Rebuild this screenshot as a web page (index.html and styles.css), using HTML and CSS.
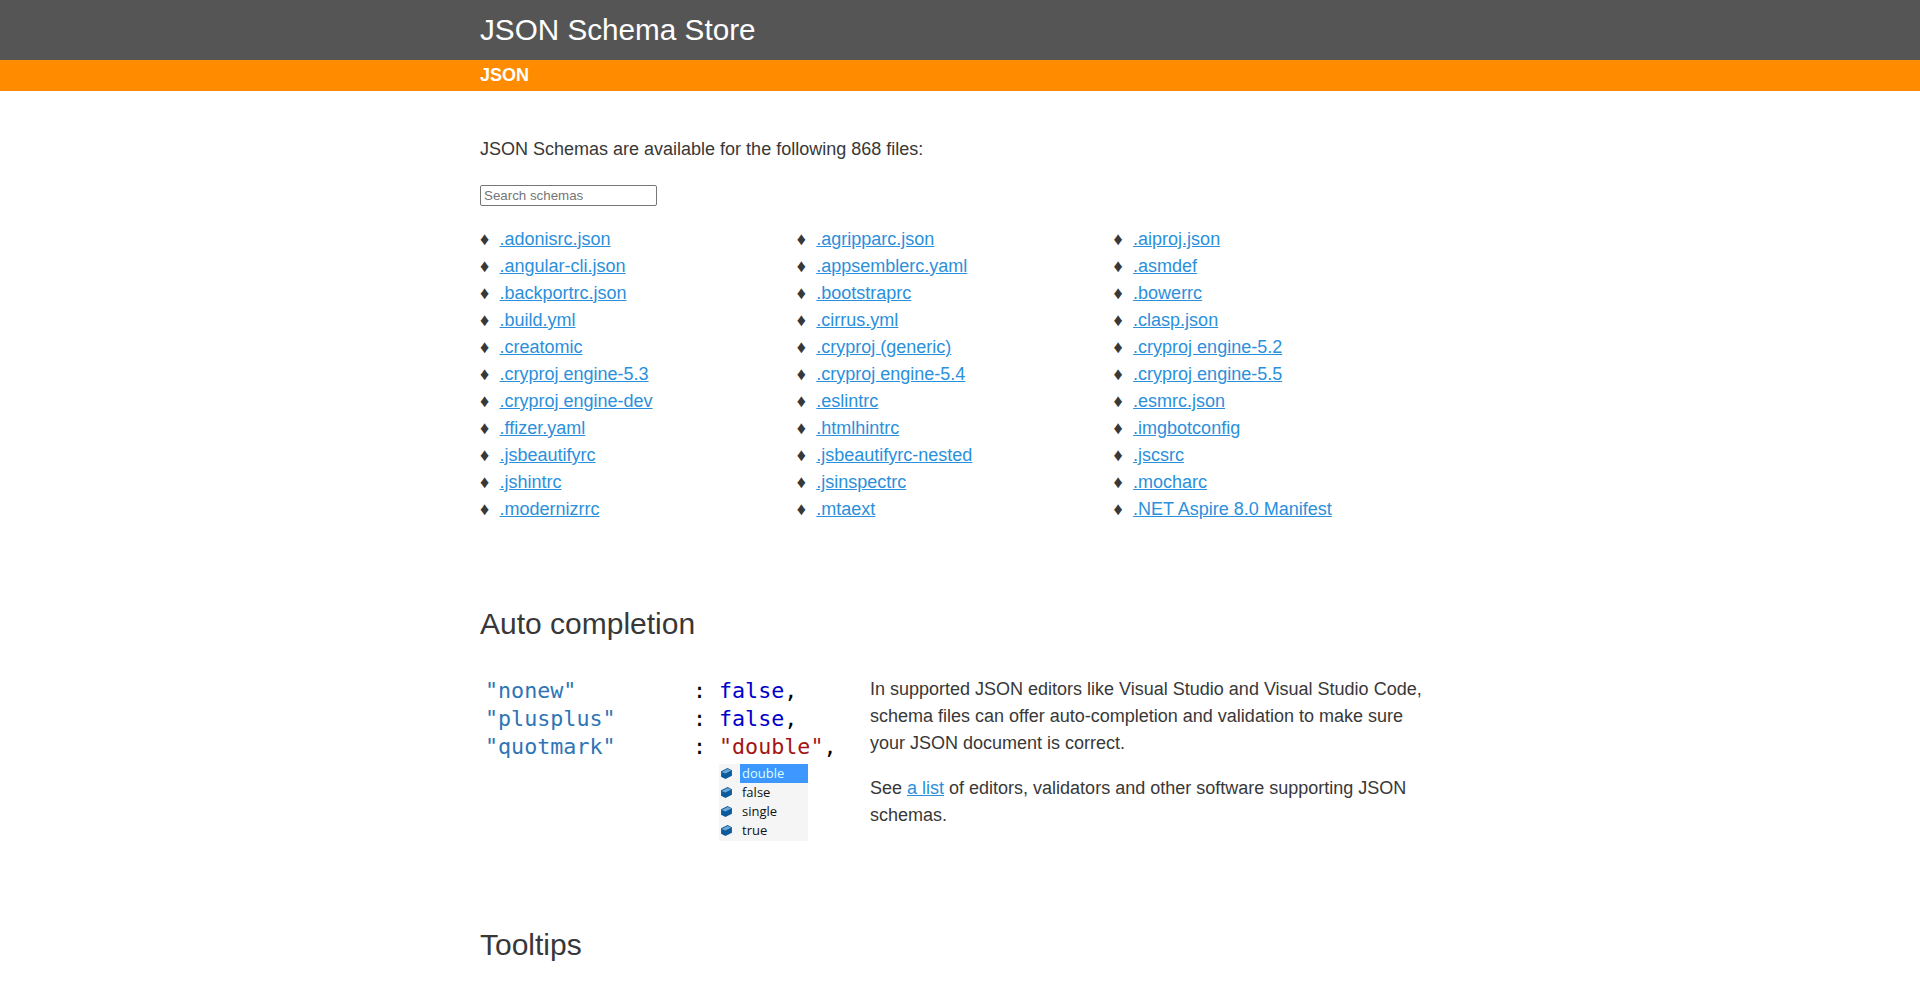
FILE: index.html
```html
<!DOCTYPE html>
<html lang="en">
<head>
<meta charset="utf-8">
<title>JSON Schema Store</title>
<link rel="stylesheet" href="styles.css">
</head>
<body>
<header class="site-header">
  <div class="wrap"><h1 class="site-title">JSON Schema Store</h1></div>
</header>
<nav class="site-nav">
  <div class="wrap"><a class="nav-link" href="#">JSON</a></div>
</nav>
<main class="wrap main">
  <p class="intro">JSON Schemas are available for the following 868 files:</p>
  <input class="search" type="search" placeholder="Search schemas">
  <ul class="schemas">
    <li><a href="#">.adonisrc.json</a></li>
    <li><a href="#">.agripparc.json</a></li>
    <li><a href="#">.aiproj.json</a></li>
    <li><a href="#">.angular-cli.json</a></li>
    <li><a href="#">.appsemblerc.yaml</a></li>
    <li><a href="#">.asmdef</a></li>
    <li><a href="#">.backportrc.json</a></li>
    <li><a href="#">.bootstraprc</a></li>
    <li><a href="#">.bowerrc</a></li>
    <li><a href="#">.build.yml</a></li>
    <li><a href="#">.cirrus.yml</a></li>
    <li><a href="#">.clasp.json</a></li>
    <li><a href="#">.creatomic</a></li>
    <li><a href="#">.cryproj (generic)</a></li>
    <li><a href="#">.cryproj engine-5.2</a></li>
    <li><a href="#">.cryproj engine-5.3</a></li>
    <li><a href="#">.cryproj engine-5.4</a></li>
    <li><a href="#">.cryproj engine-5.5</a></li>
    <li><a href="#">.cryproj engine-dev</a></li>
    <li><a href="#">.eslintrc</a></li>
    <li><a href="#">.esmrc.json</a></li>
    <li><a href="#">.ffizer.yaml</a></li>
    <li><a href="#">.htmlhintrc</a></li>
    <li><a href="#">.imgbotconfig</a></li>
    <li><a href="#">.jsbeautifyrc</a></li>
    <li><a href="#">.jsbeautifyrc-nested</a></li>
    <li><a href="#">.jscsrc</a></li>
    <li><a href="#">.jshintrc</a></li>
    <li><a href="#">.jsinspectrc</a></li>
    <li><a href="#">.mocharc</a></li>
    <li><a href="#">.modernizrrc</a></li>
    <li><a href="#">.mtaext</a></li>
    <li><a href="#">.NET Aspire 8.0 Manifest</a></li>
  </ul>
  <section class="feature">
    <h2 class="feature-title">Auto completion</h2>
    <div class="feature-body">
      <div class="shot">
        <div class="code">
          <span class="key">"nonew"</span><span class="colon">:</span><span class="val"><span class="kw">false</span>,</span>
          <span class="key">"plusplus"</span><span class="colon">:</span><span class="val"><span class="kw">false</span>,</span>
          <span class="key">"quotmark"</span><span class="colon">:</span><span class="val"><span class="str">"double"</span>,</span>
        </div>
        <ul class="popup">
          <li class="popup-item"><svg class="cube" viewBox="0 0 12 12"><path class="cube-side" d="M1 4 7 1 11 3V8L5 11 1 9Z"/><path class="cube-top" d="M1.5 4.5 7 1.8 10.5 3.2 5 6Z"/></svg><span class="popup-label popup-on">double</span></li>
          <li class="popup-item"><svg class="cube" viewBox="0 0 12 12"><path class="cube-side" d="M1 4 7 1 11 3V8L5 11 1 9Z"/><path class="cube-top" d="M1.5 4.5 7 1.8 10.5 3.2 5 6Z"/></svg><span class="popup-label">false</span></li>
          <li class="popup-item"><svg class="cube" viewBox="0 0 12 12"><path class="cube-side" d="M1 4 7 1 11 3V8L5 11 1 9Z"/><path class="cube-top" d="M1.5 4.5 7 1.8 10.5 3.2 5 6Z"/></svg><span class="popup-label">single</span></li>
          <li class="popup-item"><svg class="cube" viewBox="0 0 12 12"><path class="cube-side" d="M1 4 7 1 11 3V8L5 11 1 9Z"/><path class="cube-top" d="M1.5 4.5 7 1.8 10.5 3.2 5 6Z"/></svg><span class="popup-label">true</span></li>
        </ul>
      </div>
      <div class="copy">
        <p>In supported JSON editors like Visual Studio and Visual Studio Code, schema files can offer auto-completion and validation to make sure your JSON document is correct.</p>
        <p>See <a href="#">a list</a> of editors, validators and other software supporting JSON schemas.</p>
      </div>
    </div>
  </section>
  <section class="feature feature-next">
    <h2 class="feature-title">Tooltips</h2>
  </section>
</main>
</body>
</html>
```
FILE: styles.css
```css
* { box-sizing: border-box; }
html, body { margin: 0; height: 100%; overflow: hidden; }
body {
  font-family: "Liberation Sans", Arial, sans-serif;
  font-size: 18px;
  line-height: 27px;
  color: #383838;
  background: #fff;
}
a { color: #2b90dc; }
.wrap { width: 960px; margin: 0 auto; }
.site-header { background: #555; height: 60px; }
.site-title {
  margin: 0;
  font-size: 29.7px;
  font-weight: 400;
  line-height: 60px;
  color: #fff;
}
.site-nav { background: #ff8c00; height: 31px; }
.nav-link {
  display: block;
  font-weight: 700;
  line-height: 30px;
  color: #fff;
  text-decoration: none;
}
.main { padding-top: 45px; }
.intro { margin: 0 0 22px; }
.search {
  display: block;
  width: 177px;
  height: 21px;
  padding: 1px 3px;
  border: 1px solid #767676;
  border-radius: 2px;
  font-family: "Liberation Sans", Arial, sans-serif;
  font-size: 13.33px;
  background: #fff;
  appearance: none;
}
.search::placeholder { color: #757575; }
.schemas {
  list-style: none;
  margin: 20px 0 0;
  padding: 0;
  display: flex;
  flex-wrap: wrap;
}
.schemas li { width: 33%; }
.schemas li::before {
  content: "\2666";
  display: inline-block;
  width: 19.5px;
  font-size: 18px;
}
.feature { margin-top: 81px; }
.feature-next { margin-top: 78px; }
.feature-title {
  margin: 0;
  font-size: 30px;
  font-weight: 400;
  line-height: 40px;
}
.feature-body { display: flex; margin-top: 32px; }
.shot { width: 390px; flex: none; }
.code {
  display: grid;
  grid-template-columns: 208px 26px 1fr;
  padding-left: 5px;
  padding-top: 1px;
  font-family: "DejaVu Sans Mono", monospace;
  font-size: 21.7px;
  line-height: 28px;
  color: #000;
}
.key { color: #2e75b6; }
.kw { color: #0000cd; }
.str { color: #a31515; }
.popup {
  list-style: none;
  margin: 3px 0 0 239px;
  padding: 0 0 1px;
  width: 89px;
  background: #f5f5f5;
  font-family: "Open Sans", sans-serif;
  font-size: 13px;
  line-height: 19px;
  color: #111;
}
.popup-item { display: flex; height: 19px; align-items: center; }
.cube { width: 13px; height: 13px; margin: 0 7px 0 1px; flex: none; }
.cube-top { fill: #6fa8d8; }
.cube-side { fill: #0a5a9c; }
.popup-label { flex: 1; padding-left: 2px; }
.popup-on { background: #3c97ff; color: #dff; }
.copy { flex: 1; width: 570px; }
.copy p { margin: 0 0 18px; }
```
